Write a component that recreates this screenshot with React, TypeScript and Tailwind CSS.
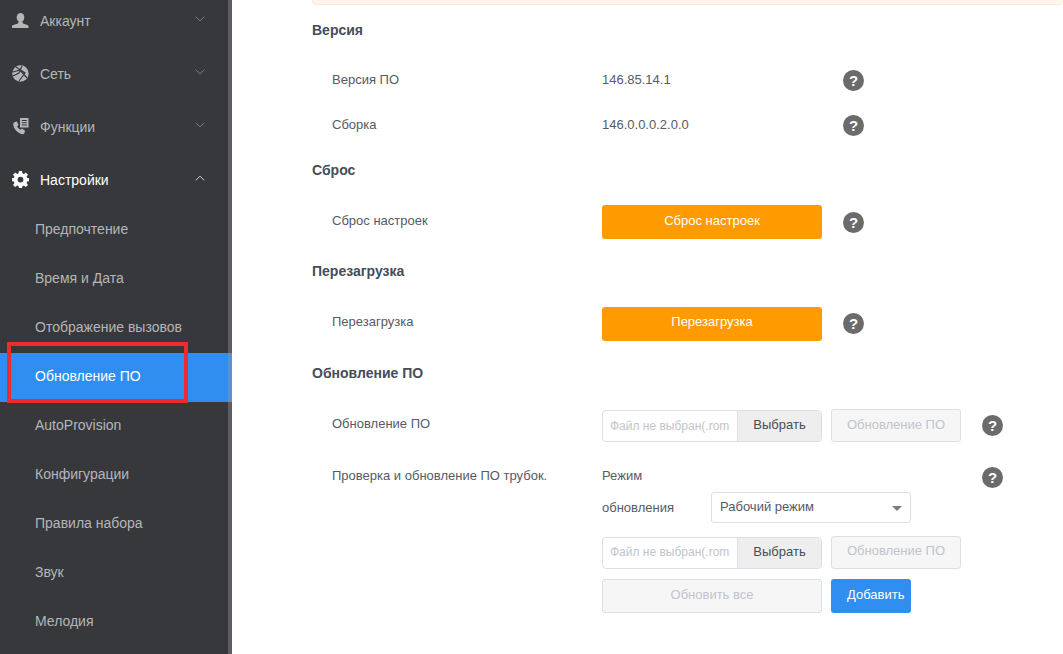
import React from "react";

const font = { fontFamily: '"Liberation Sans", Arial, sans-serif' };

function Help({ className = "" }: { className?: string }) {
  return (
    <span className={`flex h-[21px] w-[21px] shrink-0 items-center justify-center rounded-full bg-[#6b6b6b] text-[15px] font-bold leading-none text-white ${className}`}>?</span>
  );
}

function Chevron({ up = false, light = false }: { up?: boolean; light?: boolean }) {
  return (
    <svg width="10" height="6" viewBox="0 0 10 6" fill="none" className="ml-auto mr-[27px] mb-[3px]">
      <path d={up ? "M.8 5.3 L5 1.100 L9.200 5.300" : "M.8 .7 L5 4.900 L9.200 .7"} stroke={light ? "#c8c9cb" : "#7e8084"} strokeWidth="1" />
    </svg>
  );
}

const UserIcon = () => (
  <svg width="17" height="15" viewBox="0 0 17 15" fill="#b5b6b8">
    <ellipse cx="8.5" cy="4.5" rx="3.8" ry="4.5" />
    <path d="M6.5 8.5h4l.5 2 5 1.8c.5.3.5 1.2.5 2.7H0c0-1.5 0-2.4.5-2.7l5.500-1.800z" />
  </svg>
);
const GlobeIcon = () => (
  <svg width="17" height="17" viewBox="0 0 17 17">
    <circle cx="8.5" cy="8.5" r="8.2" fill="#b5b6b8" />
    <path d="M4 2 L13 8 L7 16 M1 7 L8 5 L15 13 M10 1 L7 8 L1 11" stroke="#37383c" strokeWidth="1.2" fill="none" />
  </svg>
);
const PhoneIcon = () => (
  <svg width="17" height="17" viewBox="0 0 17 17" fill="#b5b6b8">
    <path d="M3 4 L5 3.500 L6.500 7 L5.200 8.300 C5.800 10 6.800 11 8.500 11.700 L9.800 10.400 L13 12.500 L12.500 15 C12 16.500 10 16.500 8 15.500 C4 13.500 1.500 10 1.200 6.500 C1.100 5.200 2 4.300 3 4 Z" />
    <path fillRule="evenodd" d="M8 0h8.500v9.500H8zM9.800 2v1h5V2zm0 2.300v1h5v-1zm0 2.300v1h5v-1z" />
  </svg>
);
const GearIcon = () => (
  <svg width="17" height="17" viewBox="0 0 17 17" fill="#fff">
    <path fillRule="evenodd" d="M7 0h3l.4 2.300 1.500.6L13.800 1.500 16 3.700 14.600 5.600l.6 1.500L17 7.300v2.900l-1.800.3-.6 1.500 1.400 1.900L13.800 16l-1.900-1.400-1.500.6L10 17H7l-.4-1.800-1.500-.6L3.200 16 1 13.900l1.400-1.900-.6-1.500L0 10.200V7.300l1.800-.2.600-1.500L1 3.700l2.200-2.200 1.900 1.400 1.500-.6zM8.500 5.700a2.900 2.900 0 1 0 0 5.800 2.900 2.900 0 0 0 0-5.800z" />
  </svg>
);

function Top({ icon, label, open = false }: { icon: React.ReactNode; label: string; open?: boolean }) {
  return (
    <div className={`flex h-[53px] items-center pl-[12px] text-[14px] ${open ? "text-white" : "text-[#b5b6b8]"}`}>
      <span className="flex w-[17px] justify-center">{icon}</span>
      <span className="ml-[11px] pt-[2px]">{label}</span>
      <Chevron up={open} light={open} />
    </div>
  );
}

function Sub({ label, active = false }: { label: string; active?: boolean }) {
  return (
    <div className={`flex h-[49px] items-center pb-[2px] pl-[35px] text-[14px] ${active ? "bg-[#2f8ef0] text-white" : "text-[#b5b6b8]"}`}>{label}</div>
  );
}

function Heading({ children, className = "" }: { children: React.ReactNode; className?: string }) {
  return <div className={`text-[14px] font-bold leading-[20px] text-[#474c59] ${className}`}>{children}</div>;
}

function Row({ label, children, className = "", labelClass = "", helpClass = "" }: { label: string; children: React.ReactNode; className?: string; labelClass?: string; helpClass?: string }) {
  return (
    <div className={`flex items-center text-[13px] text-[#555a66] ${className}`}>
      <div className={`w-[271px] shrink-0 pl-[1px] ${labelClass}`}>{label}</div>
      <div className="w-[241px] shrink-0">{children}</div>
      <Help className={helpClass} />
    </div>
  );
}

function OrangeBtn({ children, className = "pb-[2px]" }: { children: React.ReactNode; className?: string }) {
  return <div className={`flex h-[34px] w-[220px] items-center justify-center rounded-[3px] bg-[#ff9a00] text-[13px] text-white ${className}`}>{children}</div>;
}

function FileRow({ second = false }: { second?: boolean }) {
  return (
    <div className="flex items-center">
      <div className="flex h-[32px] w-[220px] overflow-hidden rounded-[4px] border border-[#dcdfe6] text-[13px]">
        <div className={`flex w-[134px] items-center whitespace-nowrap pl-[7px] text-[12px] text-[#c0c4cc] ${second ? "pb-[2px]" : ""}`}>Файл не выбран(.rom</div>
        <div className="flex flex-1 items-center justify-center border-l border-[#dcdfe6] bg-[#eeeeee] pb-[2px] text-[#474c59]">Выбрать</div>
      </div>
      <div className={`ml-[9px] flex h-[33px] w-[130px] items-center justify-center rounded-[3px] border border-[#dcdfe6] bg-[#f6f6f6] text-[13px] text-[#c0c4cc] ${second ? "pb-[4px]" : "pb-[2px]"}`}>Обновление ПО</div>
    </div>
  );
}

export default function App() {
  return (
    <div style={font} className="relative flex h-[654px] w-[1063px] overflow-hidden bg-white">
      <aside className="relative w-[232px] shrink-0 overflow-hidden bg-[#37383c]">
        <div className="-mt-[6px]">
          <Top icon={<UserIcon />} label="Аккаунт" />
          <Top icon={<GlobeIcon />} label="Сеть" />
          <Top icon={<PhoneIcon />} label="Функции" />
          <Top icon={<GearIcon />} label="Настройки" open />
          <div>
            <Sub label="Предпочтение" />
            <Sub label="Время и Дата" />
            <Sub label="Отображение вызовов" />
            <Sub label="Обновление ПО" active />
            <Sub label="AutoProvision" />
            <Sub label="Конфигурации" />
            <Sub label="Правила набора" />
            <Sub label="Звук" />
            <Sub label="Мелодия" />
          </div>
        </div>
        <div className="absolute right-0 top-0 h-full w-[4px] bg-[#999999]/40" />
      </aside>

      <main className="flex-1 pl-[80px]">
        <div className="h-[5px] w-full rounded-b-[4px] border-b border-l border-[#faecd8] bg-[#fdf6ec]" />
        <Heading className="mt-[15px]">Версия</Heading>
        <div className="mt-[29px] pl-[19px]">
          <Row label="Версия ПО" className="h-[21px]" helpClass="mt-[2px]">146.85.14.1</Row>
          <Row label="Сборка" className="mt-[24px] h-[21px]" helpClass="mt-[2px]">146.0.0.0.2.0.0</Row>
        </div>
        <Heading className="mt-[25px]">Сброс</Heading>
        <div className="mt-[25px] pl-[19px]">
          <Row label="Сброс настроек" labelClass="pb-[3px]"><OrangeBtn>Сброс настроек</OrangeBtn></Row>
        </div>
        <Heading className="mt-[22px]">Перезагрузка</Heading>
        <div className="mt-[26px] pl-[19px]">
          <Row label="Перезагрузка" labelClass="pb-[5px]" helpClass="mb-[1px]"><OrangeBtn className="pb-[4px]">Перезагрузка</OrangeBtn></Row>
        </div>
        <Heading className="mt-[22px]">Обновление ПО</Heading>
        <div className="mt-[26px] flex items-center pl-[19px] text-[13px] text-[#555a66]">
          <div className="w-[271px] shrink-0 pb-[4px] pl-[1px]">Обновление ПО</div>
          <FileRow />
          <Help className="ml-[21px]" />
        </div>
        <div className="mt-[24px] flex pl-[19px] text-[13px] text-[#555a66]">
          <div className="w-[271px] shrink-0 pl-[1px]">Проверка и обновление ПО трубок.</div>
          <div className="w-[359px] shrink-0">
            <div className="pt-[1px] leading-[18px]">Режим</div>
            <div className="mt-[7px] flex items-center">
              <div className="w-[109px] pt-[1px]">обновления</div>
              <div className="relative flex h-[31px] w-[200px] items-center rounded-[3px] border border-[#dcdfe6] pb-[1px] pl-[8px]">
                Рабочий режим
                <span className="absolute right-[8px] top-[13px] h-0 w-0 border-x-[5px] border-t-[5px] border-x-transparent border-t-[#7a7d85]" />
              </div>
            </div>
            <div className="mt-[13px]"><FileRow second /></div>
            <div className="mt-[10px] flex">
              <div className="flex h-[34px] w-[220px] items-center justify-center rounded-[3px] border border-[#dcdfe6] bg-[#f6f6f6] pb-[2px] text-[#c0c4cc]">Обновить все</div>
              <div className="ml-[9px] flex h-[34px] w-[80px] items-center whitespace-nowrap rounded-[3px] bg-[#2f8ef0] pb-[2px] pl-[16px] text-white">Добавить</div>
            </div>
          </div>
          <Help className="ml-[21px] mt-[1px]" />
        </div>
      </main>

      <div className="absolute left-[7px] top-[342px] h-[61px] w-[181px] border-[4px] border-[#ee2a2d]" />
    </div>
  );
}
